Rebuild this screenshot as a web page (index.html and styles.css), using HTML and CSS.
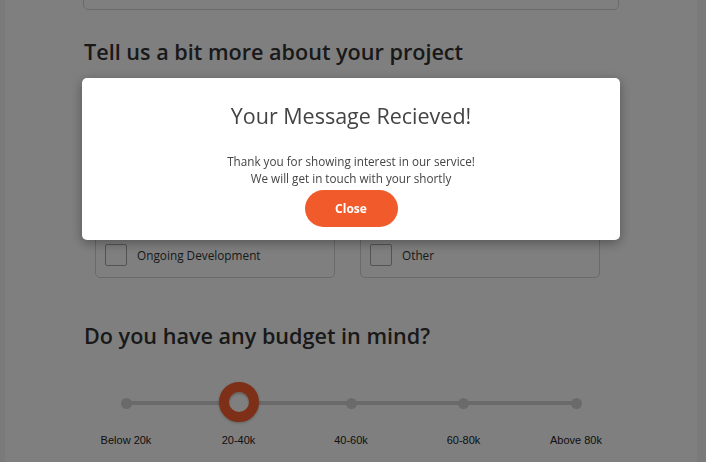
FILE: index.html
```html
<!DOCTYPE html>
<html>
<head>
<meta charset="utf-8">
<link rel="stylesheet" href="styles.css">
</head>
<body>
<div class="page">
  <div class="content">
    <div class="field-box"></div>
    <h2 class="section-title first">Tell us a bit more about your project</h2>
    <div class="options">
      <label class="option"><span class="check"></span><span class="opt-label">New Website</span></label>
      <label class="option"><span class="check"></span><span class="opt-label">Redesign</span></label>
      <label class="option"><span class="check"></span><span class="opt-label">Mobile App</span></label>
      <label class="option"><span class="check"></span><span class="opt-label">E-commerce</span></label>
      <label class="option"><span class="check"></span><span class="opt-label">Ongoing Development</span></label>
      <label class="option"><span class="check"></span><span class="opt-label">Other</span></label>
    </div>
    <h2 class="section-title budget">Do you have any budget in mind?</h2>
    <div class="slider">
      <div class="track">
        <span class="dot"></span>
        <span class="dot active"></span>
        <span class="dot"></span>
        <span class="dot"></span>
        <span class="dot"></span>
      </div>
      <div class="ticks">
        <span>Below 20k</span>
        <span>20-40k</span>
        <span>40-60k</span>
        <span>60-80k</span>
        <span>Above 80k</span>
      </div>
    </div>
  </div>
</div>
<div class="overlay">
  <div class="modal">
    <h3 class="modal-title">Your Message Recieved!</h3>
    <p class="modal-text">Thank you for showing interest in our service!<br>We will get in touch with your shortly</p>
    <button class="close-btn">Close</button>
  </div>
</div>
</body>
</html>
```
FILE: styles.css
```css
* { box-sizing: border-box; }
html, body { margin: 0; padding: 0; }
body {
  background: #f4f4f4;
  font-family: "Open Sans", "Noto Sans", sans-serif;
  color: #333;
  height: 462px;
  overflow: hidden;
}
.page {
  display: flow-root;
  margin: 0 9px 0 5px;
  background: #fff;
  height: 462px;
}
.content {
  padding: 0 78px;
}
.field-box {
  margin-top: -50px;
  height: 60px;
  border: 1px solid #d6d6d6;
  border-radius: 5px;
}
.section-title {
  margin: 0;
  font-weight: 600;
  font-size: 21.6px;
  line-height: 30px;
  color: #333;
  padding-left: 1px;
}
.section-title.first { margin-top: 27px; }
.options {
  display: grid;
  grid-template-columns: 240px 240px;
  column-gap: 25px;
  row-gap: 24px;
  margin: 25px 19px 0 12px;
}
.option {
  display: flex;
  align-items: center;
  height: 46px;
  padding: 0 9px;
  border: 1px solid #d4d4d4;
  border-radius: 5px;
  font-size: 11.8px;
  color: #333;
}
.check {
  width: 22px;
  height: 22px;
  border: 1px solid #a8a8a8;
  border-radius: 2px;
  margin-right: 10px;
  flex: none;
}
.section-title.budget { margin-top: 43px; }
.slider {
  margin-top: 50px;
  padding: 0 38px;
}
.track {
  height: 4px;
  background: #d4d4d4;
  margin: 0 5px;
  display: flex;
  justify-content: space-between;
  align-items: center;
}
.dot {
  width: 11px;
  height: 11px;
  border-radius: 50%;
  background: #d4d4d4;
  margin: 0 -5.5px;
}
.dot.active {
  width: 40px;
  height: 40px;
  margin: 0 -20px;
  background: #fff;
  border: 10.5px solid #fd5e30;
  box-shadow: 0 1px 3px rgba(0,0,0,0.25), inset 0 2px 2px rgba(0,0,0,0.2);
  position: relative;
  top: -1px;
}
.ticks {
  display: flex;
  justify-content: space-between;
  margin: 29px -35px 0 -35px;
  font-family: "Liberation Sans", Arial, sans-serif;
  font-size: 11px;
  color: #222;
}
.ticks span { width: 80px; text-align: center; }
.overlay {
  position: fixed;
  inset: 0;
  background: rgba(0,0,0,0.5);
}
.modal {
  position: absolute;
  left: 82px;
  top: 78px;
  width: 538px;
  height: 162px;
  background: #fff;
  border-radius: 5px;
  box-shadow: 0 3px 12px rgba(0,0,0,0.35);
  text-align: center;
  padding-top: 20px;
}
.modal-title {
  margin: 0;
  font-weight: 400;
  font-size: 21.5px;
  line-height: 36px;
  color: #444;
}
.modal-text {
  margin: 19px 0 0;
  font-size: 11.7px;
  line-height: 17px;
  color: #444;
}
.close-btn {
  display: block;
  margin: 3px auto 0;
  width: 93px;
  height: 37px;
  border: none;
  border-radius: 19px;
  background: #f15a2b;
  color: #fff;
  font-family: "Open Sans", sans-serif;
  font-weight: 700;
  font-size: 12px;
}
```
